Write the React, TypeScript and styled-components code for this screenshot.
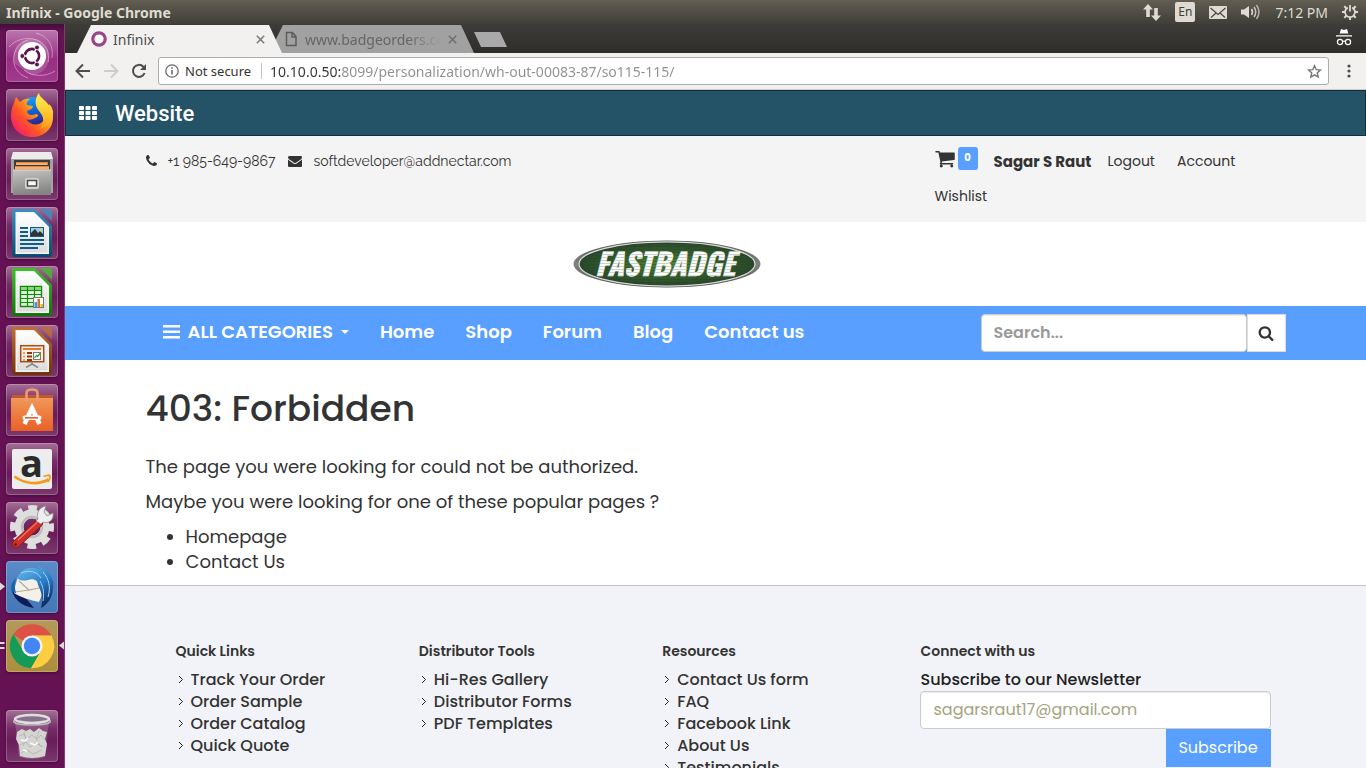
import React from "react";
import styled, { createGlobalStyle, css } from "styled-components";

const ui = `"Noto Sans", "Open Sans", sans-serif`;
const body = `Poppins, Inter, "Open Sans", sans-serif`;
const thin = `Raleway, Lato, "Open Sans", sans-serif`;
const blue = "#589fff";
const ink = "#333333";

const GlobalStyle = createGlobalStyle`
  *, *::before, *::after { box-sizing: border-box; }
  body { margin: 0; background: #ffffff; }
  button, input { font: inherit; }
  button { border: 0; padding: 0; background: none; cursor: pointer; }
  a { color: inherit; text-decoration: none; }
  ul { list-style: none; margin: 0; padding: 0; }
  h1, h2, p { margin: 0; }
  svg { display: block; flex: none; overflow: visible; }
`;

/* ---------- desktop shell ---------- */

const Desktop = styled.div`
  display: flex;
  flex-direction: column;
  height: 100vh;
  overflow: hidden;
  font-family: ${ui};
`;

const TopPanel = styled.header`
  flex: none;
  display: flex;
  align-items: center;
  justify-content: space-between;
  height: 24px;
  padding: 0 8px 0 6px;
  background: linear-gradient(#625e53, #3f3e38);
  color: #dfdbd2;
  font-size: 14px;
`;

const WindowTitle = styled.span`
  font-weight: 700;
  white-space: nowrap;
`;

const Tray = styled.div`
  display: flex;
  align-items: center;
  gap: 14px;
`;

const Language = styled.span`
  width: 20px;
  height: 20px;
  border-radius: 2px;
  background: #dfdbd2;
  color: #3f3e38;
  font-size: 12px;
  line-height: 20px;
  text-align: center;
`;

const Clock = styled.time`
  white-space: nowrap;
`;

const Workspace = styled.div`
  flex: 1;
  display: flex;
  min-height: 0;
`;

const Launcher = styled.nav`
  flex: none;
  display: flex;
  flex-direction: column;
  gap: 7px;
  width: 65px;
  padding: 6px 7px 6px 6px;
  background: linear-gradient(#450c3a, #651254 8px);
  border-right: 1px solid #84396f;
`;

type TileKind = "home" | "blue" | "gold" | "plain";

const tileFill: Record<TileKind, string> = {
  home: "linear-gradient(#bb77ac, #992d84 55%, #a13a8c)",
  blue: "linear-gradient(#5a8cc8, #4576b5)",
  gold: "linear-gradient(#b39a5b, #ac8e3c)",
  plain: "linear-gradient(#a56f97, #752d66 35%, #6b1b5a 60%, #7b3a6e)",
};

const Tile = styled.button<{ $kind: TileKind; $last?: boolean }>`
  position: relative;
  flex: none;
  width: 52px;
  height: 52px;
  border-radius: 4px;
  background: ${(p) => tileFill[p.$kind]};
  box-shadow: inset 0 0 0 1px rgba(255, 255, 255, 0.22), 0 1px 3px rgba(0, 0, 0, 0.35);
  ${(p) => p.$last && css`margin-top: auto;`}
`;

const Pip = styled.svg<{ $side: "left" | "right" }>`
  position: absolute;
  top: 21px;
  ${(p) => (p.$side === "left" ? "left: -6px;" : "right: -6px;")}
`;

/* ---------- browser ---------- */

const Browser = styled.div`
  flex: 1;
  min-width: 0;
  display: flex;
  flex-direction: column;
`;

const TabStrip = styled.div`
  flex: none;
  display: flex;
  align-items: flex-end;
  height: 29px;
  padding-left: 12px;
  background: linear-gradient(#3d3c39, #2e2d2a);
`;

const Tab = styled.div<{ $active?: boolean }>`
  position: relative;
  z-index: ${(p) => (p.$active ? 1 : 0)};
  display: flex;
  align-items: center;
  gap: 6px;
  width: 205px;
  height: 28px;
  padding: 0 17px 0 14px;
  background: ${(p) => (p.$active ? "#f2f1f0" : "#a1a1a1")};
  color: ${(p) => (p.$active ? "#4c4c4c" : "#666666")};
  clip-path: polygon(14px 0, calc(100% - 13px) 0, 100% 100%, 0 100%);
  font-size: 14px;
  & + & { margin-left: -13px; }
`;

const TabLabel = styled.span<{ $fade?: boolean }>`
  flex: 1;
  min-width: 0;
  overflow: hidden;
  white-space: nowrap;
  ${(p) => p.$fade && css`mask-image: linear-gradient(to right, #000 75%, transparent);`}
`;

const NewTab = styled.button`
  width: 33px;
  height: 15px;
  margin-bottom: 6px;
  background: #a9a9a9;
  clip-path: polygon(0 0, 26px 0, 100% 100%, 7px 100%);
`;

const Incognito = styled.svg`
  margin: 0 14px 7px auto;
`;

const Toolbar = styled.div`
  flex: none;
  display: flex;
  align-items: center;
  gap: 11px;
  height: 37px;
  padding: 0 9px;
  background: #f2f1f0;
  border-bottom: 1px solid #c9ccc6;
`;

const ToolButton = styled.button`
  display: grid;
  place-items: center;
  width: 17px;
  height: 28px;
`;

const Omnibox = styled.div`
  flex: 1;
  min-width: 0;
  display: flex;
  align-items: center;
  height: 28px;
  padding: 0 6px;
  border: 1px solid #adadad;
  border-radius: 3px;
  background: #ffffff;
  color: #333333;
  font-size: 14px;
`;

const Security = styled.span`
  margin-left: 6px;
  padding-right: 10px;
  border-right: 1px solid #c4c4c4;
  font-size: 13px;
  line-height: 16px;
  white-space: nowrap;
`;

const Address = styled.input`
  flex: 1;
  min-width: 0;
  border: 0;
  padding: 0;
  margin-left: 8px;
  outline: 0;
  background: linear-gradient(to right, #333333 72px, #8f8f8f 72px);
  background-clip: text;
  -webkit-background-clip: text;
  color: transparent;
`;

/* ---------- site ---------- */

const Site = styled.div`
  flex: 1;
  min-height: 0;
  overflow: hidden;
  background: #ffffff;
  color: ${ink};
  font-family: ${body};
`;

const AdminBar = styled.div`
  display: flex;
  align-items: center;
  gap: 18px;
  height: 46px;
  padding: 0 13px;
  border: 1px solid #12303c;
  background: #245267;
  color: #ffffff;
  font: 500 22px Roboto, sans-serif;
`;

const Container = styled.div`
  max-width: 1170px;
  margin: 0 auto;
  padding: 0 15px;
`;

const ContactBar = styled.div`
  background: #f4f4f4;
`;

const ContactRow = styled(Container)`
  display: flex;
  justify-content: space-between;
  min-height: 86px;
  padding-top: 8px;
`;

const ContactList = styled.ul`
  display: flex;
  gap: 13px;
  font-family: ${thin};
  font-size: 14px;
  line-height: 34px;
`;

const ContactItem = styled.li`
  display: flex;
  align-items: center;
  gap: 11px;
  height: 34px;
`;

const AccountList = styled.ul`
  display: flex;
  flex-wrap: wrap;
  align-content: flex-start;
  column-gap: 16px;
  width: 351px;
  font-size: 14px;
  line-height: 35px;
`;

const AccountItem = styled.li<{ $wide?: boolean }>`
  height: 35px;
  padding-right: ${(p) => (p.$wide ? 6 : 0)}px;
`;

const UserName = styled.strong`
  font-size: 15px;
`;

const CartLink = styled.a`
  display: flex;
  align-items: center;
  gap: 3px;
  height: 28px;
`;

const CartCount = styled.span`
  width: 20px;
  height: 23px;
  border-radius: 3px;
  background: ${blue};
  color: #ffffff;
  font-size: 10px;
  font-weight: 700;
  line-height: 22px;
  text-align: center;
`;

const LogoRow = styled(Container)`
  display: flex;
  align-items: center;
  justify-content: center;
  min-height: 84px;
  padding-right: 112px;
`;

const MenuBar = styled.nav`
  background: ${blue};
  color: #ffffff;
`;

const MenuRow = styled(Container)`
  display: flex;
  align-items: center;
  justify-content: space-between;
  min-height: 54px;
`;

const Menu = styled.ul`
  display: flex;
  gap: 31px;
  padding: 0 0 2px 17px;
  font-size: 18px;
  font-weight: 600;
  line-height: 50px;
`;

const MenuLink = styled.a`
  display: flex;
  align-items: center;
  gap: 8px;
  height: 52px;
  white-space: nowrap;
`;

const Search = styled.form`
  display: flex;
  width: 305px;
  height: 38px;
`;

const SearchInput = styled.input`
  flex: 1;
  min-width: 0;
  padding: 0 12px 2px;
  border: 1px solid #cccccc;
  border-radius: 4px;
  background: #ffffff;
  box-shadow: inset 0 1px 1px rgba(0, 0, 0, 0.08);
  color: ${ink};
  font-size: 16px;
  font-weight: 600;
  &::placeholder { color: #999999; opacity: 1; }
`;

const SearchButton = styled.button`
  display: grid;
  place-items: center;
  width: 39px;
  border: 1px solid #dddddd;
  background: #ffffff;
`;

const Content = styled.main`
  font-size: 18px;
  line-height: 25px;
  padding: 29px 0 11px;
`;

const Title = styled.h1`
  font-size: 36px;
  font-weight: 500;
  line-height: 40px;
  margin-bottom: 25px;
`;

const Text = styled.p`
  margin-bottom: 10px;
`;

const Suggestions = styled.ul`
  list-style: disc;
  padding-left: 40px;
`;

const Footer = styled.footer`
  border-top: 1px solid #c4c4c4;
  background: #f2f3f8;
`;

const FooterGrid = styled.div`
  display: grid;
  grid-template-columns: 2fr 2fr 2fr 3fr;
  max-width: 1170px;
  margin: 0 auto;
  padding: 55px 30px 40px 45px;
`;

const FooterColumn = styled.section<{ $inset?: boolean }>`
  padding-left: ${(p) => (p.$inset ? 15 : 0)}px;
  font-size: 16px;
  font-weight: 500;
  line-height: 22px;
`;

const FooterHeading = styled.h2`
  font-size: 14px;
  font-weight: 600;
  line-height: 20px;
  margin-bottom: 8px;
`;

const FooterLink = styled.a`
  display: flex;
  align-items: center;
  gap: 7px;
  padding-left: 2px;
`;

const Newsletter = styled.form`
  display: flex;
  flex-direction: column;
  align-items: flex-end;
`;

const NewsletterLabel = styled.label`
  align-self: flex-start;
  color: #222222;
`;

const NewsletterInput = styled.input`
  width: 100%;
  height: 38px;
  padding: 0 12px 2px;
  border: 1px solid #cccccc;
  border-radius: 4px;
  background: #ffffff;
  box-shadow: inset 0 1px 1px rgba(0, 0, 0, 0.08);
  font-weight: 400;
  &::placeholder { color: #a5a380; opacity: 1; }
`;

const SubscribeButton = styled.button`
  width: 105px;
  height: 38px;
  background: ${blue};
  color: #ffffff;
  font-weight: 400;
`;

/* ---------- icons ---------- */

const glyphs = {
  phone: {
    box: "192 0 1408 1792",
    d: "M1600 1240q0 27-10 70.5t-21 68.5q-21 50-122 106-94 51-186 51-27 0-53-3.5t-57.5-12.5-47-14.5-55.5-20.5-49-18q-98-35-175-83-127-79-264-216t-216-264q-48-77-83-175-3-9-18-49t-20.5-55.5-14.5-47-12.5-57.5-3.5-53q0-92 51-186 56-101 106-122 25-11 68.5-21t70.5-10q14 0 21 3 18 6 53 76 11 19 30 54t35 63.5 31 53.5q3 4 17.5 25t21.5 35.5 7 28.5q0 20-28.5 50t-62 55-62 53-28.5 46q0 9 5 22.5t8.5 20.5 14 24 11.5 19q76 137 174 235t235 174q2 1 19 11.5t24 14 20.5 8.5 22.5 5q18 0 46-28.5t53-62 55-62 50-28.5q14 0 28.5 7t35.5 21.5 25 17.5q25 15 53.5 31t63.5 35 54 30q70 35 76 53 3 7 3 21z",
  },
  envelope: {
    box: "0 0 1792 1792",
    d: "M1792 710v794q0 66-47 113t-113 47h-1472q-66 0-113-47t-47-113v-794q44 49 101 87 362 246 497 345 57 42 92.5 65.5t94.5 48 110 24.5h2q51 0 110-24.5t94.5-48 92.5-65.5q170-123 498-345 57-39 100-87zm0-294q0 79-49 151t-122 123q-376 261-468 325-10 7-42.5 31t-54 38.5-52 32.5-57.5 27-50 9h-2q-23 0-50-9t-57.5-27-52-32.5-54-38.5-42.5-31q-91-64-262-182.5t-205-142.5q-62-42-117-115.5t-55-136.5q0-78 41.5-130t118.5-52h1472q65 0 112.5 47t47.5 113z",
  },
  cart: {
    box: "64 0 1664 1792",
    d: "M704 1536q0 52-38 90t-90 38-90-38-38-90 38-90 90-38 90 38 38 90zm896 0q0 52-38 90t-90 38-90-38-38-90 38-90 90-38 90 38 38 90zm128-1088v512q0 24-16.5 42.5t-40.5 21.5l-1044 122q13 60 13 70 0 16-24 64h920q26 0 45 19t19 45-19 45-45 19h-1024q-26 0-45-19t-19-45q0-11 8-31.5t16-36 21.5-40 15.5-29.5l-177-823h-204q-26 0-45-19t-19-45 19-45 45-19h256q16 0 28.5 6.5t19.5 15.5 13 24.5 8 26 5.5 29.5 4.5 26h1201q26 0 45 19t19 45z",
  },
  search: {
    box: "0 0 1792 1792",
    d: "M1216 832q0-185-131.5-316.5t-316.5-131.5-316.5 131.5-131.5 316.5 131.5 316.5 316.5 131.5 316.5-131.5 131.5-316.5zm512 832q0 52-38 90t-90 38q-54 0-90-38l-343-342q-179 124-399 124-143 0-273.5-55.5t-225-150-150-225-55.5-273.5 55.5-273.5 150-225 225-150 273.5-55.5 273.5 55.5 225 150 150 225 55.5 273.5q0 220-124 399l343 343q37 37 37 90z",
  },
};

function Glyph({ name, width, height }: { name: keyof typeof glyphs; width: number; height: number }) {
  return (
    <svg width={width} height={height} viewBox={glyphs[name].box} fill={ink} aria-hidden>
      <path d={glyphs[name].d} />
    </svg>
  );
}

const Close = ({ color }: { color: string }) => (
  <svg width="9" height="9" viewBox="0 0 9 9" stroke={color} strokeWidth="1.5" aria-hidden>
    <path d="M.8.8l7.4 7.4M8.2.8L.8 8.2" />
  </svg>
);

const Chevron = () => (
  <svg width="6" height="10" viewBox="0 0 6 10" fill="none" stroke="#222" strokeWidth="1" aria-hidden>
    <path d="M1 1l3.500 3.500L1 8" />
  </svg>
);

const DocumentIcon = ({ dark, mid, id }: { dark: string; mid: string; id: string }) => (
  <>
    <defs>
      <linearGradient id={`${id}-frame`} x2="0" y2="1">
        <stop offset="0" stopColor={mid} />
        <stop offset="1" stopColor={dark} />
      </linearGradient>
      <linearGradient id={`${id}-sheet`} x2="0" y2="1">
        <stop offset="0" stopColor="#fff" />
        <stop offset="1" stopColor="#dcdcdc" />
      </linearGradient>
    </defs>
    <path d="M8 2h21l17 17v28q0 3-3 3H9q-3 0-3-3V4q0-2 2-2z" fill={`url(#${id}-frame)`} />
    <path d="M9.500 5h18L43 20.500V47H9.500z" fill="#f4f4f4" />
    <path d="M11 6.500h16L41.500 21v24.500H11z" fill={`url(#${id}-sheet)`} />
    <path d="M28 5v3l12 12h3z" fill="#fff" />
    <path d="M34 2h10q2 0 2 2v10z" fill={mid} opacity=".8" />
  </>
);

const launcherArt: Record<string, React.ReactNode> = {
  Dash: (
    <>
      <path d="M8 33C5 18 15 7 29 9c10 2 16 11 14 21-2 9-9 15-18 15" fill="#fff" opacity=".16" />
      <g fill="none" stroke="#fff" strokeWidth="1" opacity=".4">
        <path d="M3 17c6-7 17-11 28-7 9 4 13 13 11 22" />
        <path d="M22 48C10 44 5 33 9 22c2-6 7-10 13-12" />
        <path d="M49 41c-9 6-23 6-31-1M30 3c12 3 18 13 16 25" />
      </g>
      <circle cx="26" cy="26" r="14" fill="#fff" />
      <circle cx="26" cy="26" r="7" fill="none" stroke="#5c154c" strokeWidth="2.800" />
      <g stroke="#fff" strokeWidth="1.400">
        <path d="M26 26l-10 0M26 26l5 8.700M26 26l5-8.700" />
      </g>
      <circle cx="26" cy="26" r="5.600" fill="#fff" />
      <g fill="#5c154c" stroke="#fff" strokeWidth=".8">
        <circle cx="16.300" cy="26" r="2.400" />
        <circle cx="31" cy="17.500" r="2.400" />
        <circle cx="31" cy="34.500" r="2.400" />
      </g>
    </>
  ),
  Firefox: (
    <>
      <defs>
        <linearGradient id="fx-body" x1="1" y1="0" x2="0" y2=".9">
          <stop offset="0" stopColor="#fff34a" />
          <stop offset=".35" stopColor="#ffb31a" />
          <stop offset=".65" stopColor="#ff5426" />
          <stop offset="1" stopColor="#f0127a" />
        </linearGradient>
        <linearGradient id="fx-globe" x2=".3" y2="1">
          <stop offset="0" stopColor="#1fb0ff" />
          <stop offset=".6" stopColor="#0a5fd2" />
          <stop offset="1" stopColor="#30258c" />
        </linearGradient>
        <linearGradient id="fx-tail" x2="0" y2="1">
          <stop offset="0" stopColor="#fff556" />
          <stop offset="1" stopColor="#ff9d12" />
        </linearGradient>
      </defs>
      <circle cx="27" cy="23" r="15" fill="url(#fx-globe)" />
      <path d="M8 14l2-6 4 5c3-3 7-4 10-3-3 2-4 4-3 6l6 1c0 3-4 4-6 5 0 4 5 5 9 3 2 0 3 2 1 3-4 2-7 4-11 2 4 7 15 8 19-1 4-8-4-15-5-22 4 4 13 10 13 21 0 12-9 20-21 20S5 39 5 27c0-5 1-9 3-13z" fill="url(#fx-body)" />
      <path d="M33 4c-5 6-4 13 0 18 5 6 6 11 1 18 9-3 14-10 13-18-1-4-2-5-4-7 0 2 0 2-1 1-3-4-8-6-9-12z" fill="url(#fx-tail)" />
    </>
  ),
  Files: (
    <>
      <defs>
        <linearGradient id="files-front" x2=".2" y2="1">
          <stop offset="0" stopColor="#c4c4c2" />
          <stop offset="1" stopColor="#858583" />
        </linearGradient>
      </defs>
      <path d="M7 5h38l2 6v34H5V11z" fill="#a3a3a1" />
      <path d="M7 4h38l2 7H5z" fill="#ececea" />
      <path d="M8 12h36v12H8z" fill="#3e3c39" />
      <path d="M10 14h32v3H10zM9 18h34v5H9z" fill="#e2803c" />
      <path d="M10 16h31M9 20h34" stroke="#fbe0bd" strokeWidth="1" />
      <path d="M7 22h38v25H7z" fill="url(#files-front)" />
      <path d="M7 22h38" stroke="#ddd" strokeWidth="1" />
      <rect x="19" y="30" width="14" height="11" rx="2" fill="#d2d2d0" />
      <rect x="21.500" y="32.500" width="9" height="5.500" fill="#f8f8f8" stroke="#4c4c4a" strokeWidth="1.500" />
    </>
  ),
  Writer: (
    <>
      <DocumentIcon id="writer" dark="#064a73" mid="#3d8fc1" />
      <path d="M14 21h8M14 25h8M14 29h8M14 33h24M14 37h24M14 41h18" stroke="#0a5c91" strokeWidth="2" />
      <rect x="24.500" y="20.500" width="13" height="9" fill="#8fd0f5" stroke="#0a5c91" />
      <path d="M25 29v-3l4-4 3 4 2-2 3 3v2z" fill="#333" />
      <circle cx="35" cy="23" r="1.500" fill="#f5d041" />
    </>
  ),
  Calc: (
    <>
      <DocumentIcon id="calc" dark="#117308" mid="#43bd30" />
      <path d="M14.500 20.500h21v20h-21z" fill="#dff3da" stroke="#148a0b" strokeWidth="1.400" />
      <path d="M15 21h20v4H15z" fill="#8cd67f" />
      <path d="M14 24.500h22M14 28.500h22M14 32.500h22M14 36.500h22M21.500 20v21M28.500 20v21" stroke="#148a0b" strokeWidth="1.200" />
      <rect x="27.500" y="31.500" width="10" height="10" fill="#fff" stroke="#777" />
      <path d="M28.500 36h2.500v5h-2.500z" fill="#2a9fe8" />
      <path d="M31.500 33h2.500v8h-2.500z" fill="#e06a1f" />
      <path d="M34.500 38H37v3h-2.500z" fill="#f0b915" />
    </>
  ),
  Impress: (
    <>
      <DocumentIcon id="impress" dark="#743104" mid="#bf6e36" />
      <rect x="14.700" y="20.700" width="23" height="16" fill="#fdf0e6" stroke="#a84a14" strokeWidth="1.500" />
      <path d="M17 24h18" stroke="#e06a1f" strokeWidth="1.800" />
      <path d="M17 28h2M17 31.500h2M17 35h2" stroke="#e9a06f" strokeWidth="2" />
      <path d="M21 28h5M21 31.500h5M21 35h5" stroke="#8c3a06" strokeWidth="2" />
      <rect x="27.500" y="27.500" width="7" height="7" fill="#fff" stroke="#777" />
      <path d="M28.500 33l2-2.500 1 1 2.500-3" fill="none" stroke="#20a020" strokeWidth="1.200" />
      <path d="M26 37v2l-6 3.500M26 39l6 3.500" fill="none" stroke="#8a8a8a" strokeWidth="1.600" />
    </>
  ),
  "Ubuntu Software": (
    <>
      <defs>
        <linearGradient id="bag" x2="0" y2="1">
          <stop offset="0" stopColor="#f0985a" />
          <stop offset="1" stopColor="#ea6026" />
        </linearGradient>
      </defs>
      <path d="M6 11h41v5H6z" fill="#c05a2c" />
      <path d="M5 14h42v33H5z" fill="url(#bag)" />
      <path d="M20.500 17V9q0-3.500 5.500-3.500T31.500 9v8" fill="none" stroke="#f09a72" strokeWidth="2.600" />
      <path d="M18.500 40l7.500-16 7.500 16" fill="none" stroke="#fff" strokeWidth="4.500" />
      <rect x="16.500" y="31.500" width="19" height="4.500" rx="2.200" fill="#fff" />
      <path d="M19 33.800h13" stroke="#e95420" strokeWidth="1.500" />
    </>
  ),
  Amazon: (
    <>
      <rect x="6" y="6" width="40" height="40" rx="2" fill="#ededed" />
      <text x="25.500" y="34" textAnchor="middle" fontFamily="Open Sans, sans-serif" fontWeight="700" fontSize="38" fill="#2a2a2a">a</text>
      <path d="M8.500 33.500c11 8 24 8.500 34 3" fill="none" stroke="#f79a1c" strokeWidth="2.600" />
      <path d="M37.500 33.500c3-1.600 6-1.500 6.500-.5s-.5 4-2.500 6" fill="none" stroke="#f79a1c" strokeWidth="1.800" />
    </>
  ),
  Settings: (
    <>
      <circle cx="26" cy="25" r="18.500" fill="none" stroke="#dedede" strokeWidth="7" strokeDasharray="8.500 6.030" strokeDashoffset="4.200" />
      <circle cx="26" cy="25" r="13" fill="none" stroke="#dedede" strokeWidth="9" />
      <circle cx="26" cy="25" r="10" fill="none" stroke="#bdbdbd" strokeWidth="2.500" />
      <path d="M33 21L10 42" stroke="#821717" strokeWidth="8" strokeLinecap="round" />
      <path d="M33 21L10 42" stroke="#cc3029" strokeWidth="6.600" strokeLinecap="round" />
      <path d="M31 20.500L12 38" stroke="#ea7068" strokeWidth="1.400" />
      <path d="M32 17c-2-7 2-12 8-13l-2 6 3 4 6-3c1 7-4 11-10 9l-2 2-5-3z" fill="#eee" stroke="#8d8d8d" strokeWidth=".8" />
      <circle cx="9.500" cy="42.500" r="1.500" fill="#7e1515" />
    </>
  ),
  Thunderbird: (
    <>
      <defs>
        <linearGradient id="tb" x1=".2" x2=".7" y2="1">
          <stop offset="0" stopColor="#65b8ea" />
          <stop offset=".5" stopColor="#2b7cc8" />
          <stop offset="1" stopColor="#0e245f" />
        </linearGradient>
      </defs>
      <path d="M5 26c2 11 9 19 23 21l-9-11z" fill="#0f1c5c" />
      <path d="M12 16c-2 6-4 12-4 16 8 5 16 7 25 9l5-12-9-13-15-2z" fill="#f4f1e8" />
      <path d="M13 20l10 9 15-3M23 29L9 31" fill="none" stroke="#b5ad9b" strokeWidth="1.200" />
      <path d="M11 17c4-9 13-13 23-8 0-2-2-3-3-4 12 3 18 13 16 23-1 9-5 15-12 19 2-8 1-16-3-23 0-5-5-7-10-5-4 1-8 1-11-2z" fill="url(#tb)" />
      <path d="M15 12c8-3 16-2 20 5M37 11c6 7 8 15 5 25M34 20c4 7 4 13 3 20" fill="none" stroke="#9bd6f6" strokeWidth="1" />
      <path d="M5 29c0-5 1-8 5-12-2 7-1 11 0 15-2 0-3-1-5-3z" fill="#1b62b0" />
    </>
  ),
  "Google Chrome": (
    <>
      <path d="M26 26L7.400 14.500A22.200 22.200 0 0 1 45.500 15.500H26z" fill="#dd5146" />
      <path d="M7.400 14A22.200 22.200 0 0 0 25 48.200L34.500 32 26 26 17 31z" fill="#159b58" />
      <path d="M26 15.500h19.500A22.200 22.200 0 0 1 25 48.200L35.500 30z" fill="#ffcd40" />
      <circle cx="26" cy="26" r="10.500" fill="#f4f4f4" />
      <circle cx="26" cy="26" r="8.200" fill="#4285f4" />
    </>
  ),
  Trash: (
    <>
      <path d="M9 11l4 36q13 4 26 0l4-36z" fill="#fff" opacity=".16" />
      <path d="M11 22l5-3 4 2 4-2 4 3 5-4 4 3 4 1-2 7 2 5-2 12q-13 4-25 0l-1-11-3-6z" fill="#d5d5d1" />
      <path d="M13 26l5-2 3 5 5-4 5 4 4-4 4 5M14 35l6-3 4 5 6-4 7 4M15 43l6-3 6 4 9-4M18 22l2 8-3 6M33 21l-3 8 5 8" fill="none" stroke="#b8b8b4" strokeWidth="1" />
      <path d="M15 30l4 1 3-3M24 33l5 2 3-3M17 40l4 1" stroke="#fff" strokeWidth="1.500" fill="none" />
      <ellipse cx="26" cy="9" rx="17" ry="4" fill="#86718a" stroke="#dfdfdf" strokeWidth="2.500" />
      <path d="M8 10v2c3 4 33 4 36 0v-2" fill="none" stroke="#bdbdbb" strokeWidth="1.600" />
    </>
  ),
};

const tileKinds: Record<string, TileKind> = {
  Dash: "home",
  Thunderbird: "blue",
  "Google Chrome": "gold",
};

/* ---------- data ---------- */

const footerColumns = [
  { heading: "Quick Links", links: ["Track Your Order", "Order Sample", "Order Catalog", "Quick Quote"] },
  { heading: "Distributor Tools", links: ["Hi-Res Gallery", "Distributor Forms", "PDF Templates"] },
  { heading: "Resources", links: ["Contact Us form", "FAQ", "Facebook Link", "About Us", "Testimonials"] },
];

/* ---------- sections ---------- */

const SystemPanel = () => (
  <TopPanel>
    <WindowTitle>Infinix - Google Chrome</WindowTitle>
    <Tray>
      <svg width="18" height="17" viewBox="0 0 18 17" fill="#dfdbd2" aria-hidden>
        <path d="M5 0l5 5.500H6.800V13H3.200V5.500H0zM13 17l5-5.500h-3.200V4h-3.600v7.500H8z" />
      </svg>
      <Language>En</Language>
      <svg width="18" height="13" viewBox="0 0 18 13" aria-hidden>
        <rect width="18" height="13" rx="1" fill="#dfdbd2" />
        <path d="M1.500 2L9 8.500 16.500 2M2 11.500l5-4.500M16 11.500L11 7" fill="none" stroke="#45433d" strokeWidth="1.100" />
      </svg>
      <svg width="20" height="16" viewBox="0 0 20 16" fill="none" stroke="#dfdbd2" strokeWidth="1.500" aria-hidden>
        <path d="M0 5.500h3L8 2v12l-5-3.500H0z" fill="#dfdbd2" stroke="none" />
        <path d="M10.500 5q2 3 0 6" />
        <path d="M13 3q3.500 5 0 10" opacity=".85" />
        <path d="M15.500 1q5 7 0 14" opacity=".7" />
      </svg>
      <Clock>7:12 PM</Clock>
      <svg width="16" height="16" viewBox="0 0 16 16" fill="none" stroke="#dfdbd2" aria-hidden>
        <path d="M5.800 3.600a5 5 0 1 0 4.400 0" strokeWidth="1.800" />
        <path d="M8 1v6.500" strokeWidth="1.800" />
        <path d="M2.300 2.300l2 2M13.700 2.300l-2 2M0 8h2.800M16 8h-2.800M2.300 13.700l2-2M13.700 13.700l-2-2M8 16v-2.800" strokeWidth="2" />
      </svg>
    </Tray>
  </TopPanel>
);

const AppLauncher = () => (
  <Launcher aria-label="Launcher">
    {Object.entries(launcherArt).map(([name, art]) => (
      <Tile key={name} $kind={tileKinds[name] ?? "plain"} $last={name === "Trash"} aria-label={name}>
        <svg width="52" height="52" viewBox="0 0 52 52">{art}</svg>
        {name === "Thunderbird" && (
          <Pip $side="left" width="5" height="9" viewBox="0 0 5 9" fill="#dfdbd2"><path d="M0 .5l5 4-5 4z" /></Pip>
        )}
        {name === "Google Chrome" && (
          <>
            <Pip $side="left" width="5" height="9" viewBox="0 0 5 9" fill="#dfdbd2"><path d="M0 1h4l1 1-1 1H0zM0 6h4l1 1-1 1H0z" /></Pip>
            <Pip $side="right" width="5" height="9" viewBox="0 0 5 9" fill="#dfdbd2"><path d="M5 .5l-5 4 5 4z" /></Pip>
          </>
        )}
      </Tile>
    ))}
  </Launcher>
);

const BrowserChrome = () => (
  <>
    <TabStrip>
      <Tab $active>
        <svg width="16" height="16" viewBox="0 0 16 16" aria-hidden>
          <circle cx="8" cy="8" r="6.200" fill="#fff" stroke="#9c4488" strokeWidth="3.200" />
        </svg>
        <TabLabel>Infinix</TabLabel>
        <button aria-label="Close tab"><Close color="#787878" /></button>
      </Tab>
      <Tab>
        <svg width="16" height="16" viewBox="0 0 16 16" fill="none" stroke="#5c5c5c" strokeWidth="1.500" aria-hidden>
          <path d="M3.500 1.500h6l3.500 4v9H3.500zM9 1.500V6h4" />
        </svg>
        <TabLabel $fade>www.badgeorders.com</TabLabel>
        <button aria-label="Close tab"><Close color="#6d6d6d" /></button>
      </Tab>
      <NewTab aria-label="New tab" />
      <Incognito width="16" height="17" viewBox="0 0 16 17" fill="#fff" aria-hidden>
        <path d="M5 0l3 1 3-1 1.300 4.500H3.700zM0 6.300h16v1.300H0z" />
        <g fill="none" stroke="#fff" strokeWidth="1.200">
          <circle cx="4" cy="13" r="2.600" />
          <circle cx="12" cy="13" r="2.600" />
          <path d="M6.500 12.500q1.500-.8 3 0" />
        </g>
      </Incognito>
    </TabStrip>
    <Toolbar>
      <ToolButton aria-label="Back">
        <svg width="16" height="16" viewBox="0 0 16 16" fill="none" stroke="#4d4d4d" strokeWidth="2"><path d="M15 8H2M8 1.500L1.500 8 8 14.500" /></svg>
      </ToolButton>
      <ToolButton aria-label="Forward">
        <svg width="16" height="16" viewBox="0 0 16 16" fill="none" stroke="#cccccc" strokeWidth="2"><path d="M1 8h13M8 1.500L14.500 8 8 14.500" /></svg>
      </ToolButton>
      <ToolButton aria-label="Reload">
        <svg width="16" height="16" viewBox="0 0 16 16" fill="none" stroke="#4d4d4d" strokeWidth="2">
          <path d="M13.600 10A6 6 0 1 1 12.300 3.700L14 5.500" />
          <path d="M15 1v6H9z" fill="#4d4d4d" stroke="none" />
        </svg>
      </ToolButton>
      <Omnibox>
        <svg width="14" height="14" viewBox="0 0 14 14" fill="none" stroke="#6b6b6b" strokeWidth="1.300" aria-hidden>
          <circle cx="7" cy="7" r="6.200" />
          <path d="M7 6v4.500M7 3.300v1.500" strokeWidth="1.600" />
        </svg>
        <Security>Not secure</Security>
        <Address aria-label="Address" defaultValue="10.10.0.50:8099/personalization/wh-out-00083-87/so115-115/" />
        <svg width="15" height="15" viewBox="0 0 15 15" fill="none" stroke="#757575" strokeWidth="1.400" aria-label="Bookmark">
          <path d="M7.500 1.800l1.700 3.900 4.200.4-3.200 2.800 1 4.200-3.700-2.200-3.700 2.200 1-4.200L1.600 6.100l4.200-.4z" />
        </svg>
      </Omnibox>
      <ToolButton aria-label="Menu">
        <svg width="4" height="14" viewBox="0 0 4 14" fill="#4d4d4d"><circle cx="2" cy="2" r="1.600" /><circle cx="2" cy="7" r="1.600" /><circle cx="2" cy="12" r="1.600" /></svg>
      </ToolButton>
    </Toolbar>
  </>
);

const Logo = () => (
  <svg width="188" height="48" viewBox="0 0 188 48" role="img" aria-label="Fastbadge">
    <defs>
      <radialGradient id="badge-green">
        <stop offset="0" stopColor="#4d8438" />
        <stop offset=".6" stopColor="#345a2e" />
        <stop offset="1" stopColor="#29472a" />
      </radialGradient>
      <linearGradient id="badge-rim" x2="0" y2="1">
        <stop offset="0" stopColor="#5c5c5c" />
        <stop offset=".5" stopColor="#808080" />
        <stop offset="1" stopColor="#555" />
      </linearGradient>
      <pattern id="badge-lines" width="4" height="3" patternUnits="userSpaceOnUse">
        <path d="M0 .5h4" stroke="#22401f" strokeWidth="1" opacity=".35" />
      </pattern>
      <pattern id="badge-text" width="4" height="3" patternUnits="userSpaceOnUse">
        <path d="M0 0h4v3H0z" fill="#fff" />
        <path d="M0 2.500h4" stroke="#c9d2c7" strokeWidth="1" />
      </pattern>
    </defs>
    <ellipse cx="94" cy="24" rx="93.500" ry="23.500" fill="url(#badge-rim)" />
    <ellipse cx="94" cy="24" rx="88" ry="22.200" fill="url(#badge-green)" stroke="#dcdcdc" strokeWidth="1.200" />
    <ellipse cx="94" cy="24" rx="87" ry="21" fill="url(#badge-lines)" />
    <text x="92" y="36" textAnchor="middle" fontFamily="Oswald, Bebas Neue, Roboto Condensed, Barlow Condensed, Liberation Sans, sans-serif" fontWeight="700" fontStyle="italic" fontSize="30" fill="url(#badge-text)" stroke="#f4f6f3" strokeWidth=".5">
      FASTBADGE
    </text>
  </svg>
);

const SiteHeader = () => (
  <header>
    <AdminBar>
      <svg width="18" height="14" viewBox="0 0 18 14" fill="#fff" aria-hidden>
        {[0, 5, 10].map((y) =>
          [0, 6.500, 13].map((x) => <rect key={`${x}-${y}`} x={x} y={y} width="5" height="4" rx=".8" />)
        )}
      </svg>
      <span>Website</span>
    </AdminBar>
    <ContactBar>
      <ContactRow>
        <ContactList>
          <ContactItem><Glyph name="phone" width={11} height={14} />+1 985-649-9867</ContactItem>
          <ContactItem><Glyph name="envelope" width={14} height={14} /><a href="#mail">softdeveloper@addnectar.com</a></ContactItem>
        </ContactList>
        <AccountList>
          <AccountItem>
            <CartLink href="#cart" aria-label="Cart"><Glyph name="cart" width={20} height={21} /><CartCount>0</CartCount></CartLink>
          </AccountItem>
          <AccountItem><UserName>Sagar S Raut</UserName></AccountItem>
          <AccountItem $wide><a href="#logout">Logout</a></AccountItem>
          <AccountItem $wide><a href="#account">Account</a></AccountItem>
          <AccountItem><a href="#wishlist">Wishlist</a></AccountItem>
        </AccountList>
      </ContactRow>
    </ContactBar>
    <LogoRow><Logo /></LogoRow>
    <MenuBar>
      <MenuRow>
        <Menu>
          <li>
            <MenuLink href="#categories">
              <svg width="17" height="14" viewBox="0 0 17 14" fill="#fff" aria-hidden>
                <path d="M0 0h17v2.500H0zM0 5.500h17V8H0zM0 11h17v2.500H0z" />
              </svg>
              ALL CATEGORIES
              <svg width="8" height="4" viewBox="0 0 8 4" fill="#fff" aria-hidden><path d="M0 0h8L4 4z" /></svg>
            </MenuLink>
          </li>
          {["Home", "Shop", "Forum", "Blog", "Contact us"].map((item) => (
            <li key={item}><MenuLink href="#menu">{item}</MenuLink></li>
          ))}
        </Menu>
        <Search>
          <SearchInput aria-label="Search" placeholder="Search..." />
          <SearchButton type="button" aria-label="Search"><Glyph name="search" width={16} height={16} /></SearchButton>
        </Search>
      </MenuRow>
    </MenuBar>
  </header>
);

const SiteFooter = () => (
  <Footer>
    <FooterGrid>
      {footerColumns.map(({ heading, links }) => (
        <FooterColumn key={heading}>
          <FooterHeading>{heading}</FooterHeading>
          <ul>
            {links.map((link) => (
              <li key={link}><FooterLink href="#footer"><Chevron />{link}</FooterLink></li>
            ))}
          </ul>
        </FooterColumn>
      ))}
      <FooterColumn $inset>
        <FooterHeading>Connect with us</FooterHeading>
        <Newsletter>
          <NewsletterLabel htmlFor="newsletter">Subscribe to our Newsletter</NewsletterLabel>
          <NewsletterInput id="newsletter" type="email" placeholder="sagarsraut17@gmail.com" />
          <SubscribeButton type="button">Subscribe</SubscribeButton>
        </Newsletter>
      </FooterColumn>
    </FooterGrid>
  </Footer>
);

export default function App() {
  return (
    <Desktop>
      <GlobalStyle />
      <SystemPanel />
      <Workspace>
        <AppLauncher />
        <Browser>
          <BrowserChrome />
          <Site>
            <SiteHeader />
            <Content>
              <Container>
                <Title>403: Forbidden</Title>
                <Text>The page you were looking for could not be authorized.</Text>
                <Text>Maybe you were looking for one of these popular pages ?</Text>
                <Suggestions>
                  <li><a href="#home">Homepage</a></li>
                  <li><a href="#contact">Contact Us</a></li>
                </Suggestions>
              </Container>
            </Content>
            <SiteFooter />
          </Site>
        </Browser>
      </Workspace>
    </Desktop>
  );
}
